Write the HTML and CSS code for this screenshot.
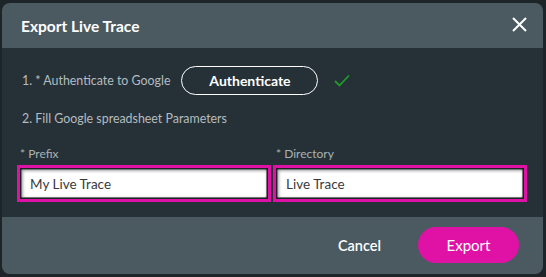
FILE: index.html
```html
<!DOCTYPE html>
<html lang="en">
<head>
  <meta charset="UTF-8">
  <meta name="viewport" content="width=device-width, initial-scale=1.0">
  <title>Export Live Trace</title>
  <link rel="stylesheet" href="styles.css">
</head>
<body>

  <div class="dialog">
    <div class="dialog-header">
      <h2>Export Live Trace</h2>
      <button class="close-btn" aria-label="Close">
        <svg width="15" height="15" viewBox="0 0 15 15">
          <path d="M1 1 L14 14 M14 1 L1 14" stroke="#fff" stroke-width="2" fill="none"/>
        </svg>
      </button>
    </div>

    <div class="dialog-body">
      <div class="step step-auth">
        <span>1. * Authenticate to Google</span>
        <button class="auth-btn">Authenticate</button>
        <svg class="check" width="16" height="13" viewBox="0 0 16 13">
          <path d="M1 7 L5.5 11.5 L15 1.5" stroke="#1f9a2a" stroke-width="1.8" fill="none"/>
        </svg>
      </div>
      <div class="step step-fill">2. Fill Google spreadsheet Parameters</div>

      <div class="fields">
        <div class="field">
          <label>* Prefix</label>
          <div class="input-wrap">
            <input type="text" value="My Live Trace">
          </div>
        </div>
        <div class="field">
          <label>* Directory</label>
          <div class="input-wrap">
            <input type="text" value="Live Trace">
          </div>
        </div>
      </div>
    </div>

    <div class="dialog-footer">
      <button class="cancel-btn">Cancel</button>
      <button class="export-btn">Export</button>
    </div>
  </div>

</body>
</html>
```

FILE: styles.css
```css
/* General Reset */
* {
  margin: 0;
  padding: 0;
  box-sizing: border-box;
}

body {
  background: #1e2529;
  font-family: 'Lato', 'Liberation Sans', sans-serif;
  height: 100vh;
  overflow: hidden;
  padding: 3px 3px 3px 2px;
}

.dialog {
  width: 541px;
  height: 271px;
  background: #263137;
  border-radius: 8px;
  overflow: hidden;
  display: flex;
  flex-direction: column;
}

.dialog-header {
  height: 45px;
  background: #4b5a61;
  display: flex;
  align-items: center;
  justify-content: space-between;
  padding: 0 16px 0 19px;
}

.dialog-header h2 {
  color: #fff;
  font-size: 15.5px;
  font-weight: bold;
}

.close-btn {
  background: none;
  border: none;
  display: flex;
  cursor: pointer;
  margin-top: -2px;
}

.dialog-body {
  flex: 1;
  padding: 18px 16px 0 15px;
}

.step {
  color: #b4bcc0;
  font-size: 12.4px;
  padding-left: 5px;
}

.step-auth {
  display: flex;
  align-items: center;
  height: 29px;
}

.auth-btn {
  margin-left: 11px;
  width: 137px;
  height: 29px;
  border: 1px solid #fff;
  border-radius: 15px;
  background: transparent;
  color: #fff;
  font-family: inherit;
  font-size: 14px;
  font-weight: bold;
  cursor: pointer;
}

.check {
  margin-left: 16px;
}

.step-fill {
  margin-top: 14px;
  line-height: 20px;
}

.fields {
  display: grid;
  grid-template-columns: 1fr 1fr;
  gap: 2px;
  margin-top: 17px;
}

.field label {
  display: block;
  color: #a9b1b5;
  font-size: 12px;
  line-height: 16px;
  padding-left: 3px;
  margin-bottom: 3px;
}

.input-wrap {
  border: 3px solid #e012a6;
  padding: 1px;
  background: #1b2226;
}

.input-wrap input {
  display: block;
  width: 100%;
  height: 29px;
  border: 1px solid #777;
  border-radius: 2px;
  box-shadow: inset 1px 1px 3px rgba(0, 0, 0, 0.35);
  background: #fff;
  padding: 0 8px;
  font-family: inherit;
  font-size: 13.5px;
  color: #3a3a3a;
  outline: none;
}

.dialog-footer {
  height: 57px;
  background: #4b5a61;
  display: flex;
  align-items: center;
  justify-content: flex-end;
  padding: 0 24px 1px 0;
  gap: 37px;
}

.cancel-btn {
  background: none;
  border: none;
  color: #fff;
  font-family: inherit;
  font-size: 14.5px;
  font-weight: 600;
  cursor: pointer;
}

.export-btn {
  width: 101px;
  height: 36px;
  border: none;
  border-radius: 18px;
  background: #e012a6;
  color: #fff;
  font-family: inherit;
  font-size: 15px;
  cursor: pointer;
}
```
